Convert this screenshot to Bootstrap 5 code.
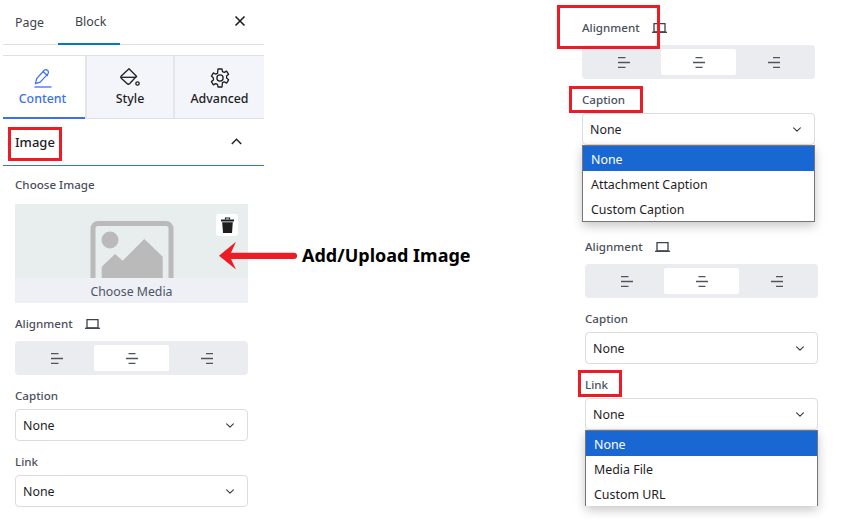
<!DOCTYPE html>
<html lang="en"><head><meta charset="utf-8"><title>Image block</title>
<link href="https://cdn.jsdelivr.net/npm/bootstrap@5.3.0/dist/css/bootstrap.min.css" rel="stylesheet">
<style>
html,body{height:100%}
body{margin:0;background:#fff;font-family:"Noto Sans",sans-serif;color:#1e1e1e;overflow:hidden}
.stage{position:relative;width:862px;height:528px;overflow:hidden}
.side{width:261px;margin-left:3px;flex:none}
.top-tabs{height:45px;border-bottom:1px solid #e0e0e0;padding-left:0;align-items:stretch}
.top-tabs .tab-item{padding:1px 14px 0 12px;font-size:12.4px;color:#3c434a;display:flex;align-items:center;text-decoration:none;height:45px;width:55px}
.top-tabs .tab-item.on{width:62px;padding:2px 0 0 17px;border-bottom:2px solid #007cba;color:#3c434a;height:45px}
.close-x{margin-left:auto;margin-right:18px;display:flex;align-items:center;padding-bottom:3px}
.tri{margin-top:10px;height:64px;border-top:1px solid #e0e0e0;border-bottom:1px solid #e0e0e0}
.tri-item{display:flex;flex-direction:column;align-items:center;background:#f4f5fa;font-size:12.4px;font-weight:500;color:#1e1e1e;padding-top:12px;border-left:2px solid #e4e5ea;text-decoration:none;line-height:18px}
.tri-item svg{display:block;margin-bottom:2px}
.tri-item.on{background:#fff;color:#3b6ef8;border-left:0;border-bottom:2px solid #3b6ef8;height:63px;padding-right:3px}
.sec-head{height:47px;border-bottom:1px solid #3b6ef8;padding:2px 22px 0 12px;font-size:13px;font-weight:500;color:#1e2026}
.body-pad{padding:10px 16px 0 12px}
.lbl{font-size:11.6px;font-weight:500;color:#4b505c;line-height:18px;height:18px;margin:12px 0 4px}
.lbl.dev{margin-bottom:8px;display:flex;align-items:center;gap:12px}
.pick{height:99px;background:#e8eded;margin-top:10px;position:relative;overflow:hidden}
.pick-art{display:block;margin:17px 0 0 75px}
.pick-foot{position:absolute;left:0;right:0;bottom:0;height:25px;background:#eef0f6;text-align:center;font-size:12.3px;line-height:27px;color:#4b5563}
.trash{position:absolute;top:10px;right:10px;width:22px;height:22px;background:#fff;border-radius:3px}
.seg{height:34px;background:#ebecf0;border-radius:4px;padding:4px 0}
.seg-it{display:flex;align-items:center;justify-content:center;border-radius:2px}
.seg-it.on{flex:0 0 75px;background:#fff}
.seg-it.pad{flex:0 0 79px;padding-left:5px}
.seg-it.rest{flex:0 0 79px;padding-right:3px}
.fake-select.form-select{height:32px;font-size:12.4px;line-height:18px;padding:2px 24px 0 7px;border:1px solid #dcdcde;border-radius:4px;color:#1e1e1e;background-size:12px 9px;background-position:right 11px center;display:flex;align-items:center;font-family:inherit}
.rcol{flex:none;width:236px;margin-left:318px}
.pnl{width:233px}
.pnl.second{margin-left:3px}
.drop-wrap{position:relative}
.opts{position:absolute;left:0;right:0;top:32px;background:#fff;border:1px solid #767676;box-shadow:0 4px 10px rgba(0,0,0,.22);font-size:12.4px;z-index:3;color:#1e1e1e}
.opts.cut{border-bottom:0;height:76px}
.opts .o{height:25px;line-height:27px;padding-left:8px}
.opts .o.sel{background:#1967d2;color:#fff}
.mark-box{position:absolute;border:3px solid #ed1c24;z-index:5;pointer-events:none}
.note{position:absolute;left:219px;top:241px;display:flex;align-items:center;gap:5px;z-index:4;height:30px}
.note-txt{font-size:18px;font-weight:700;color:#000;white-space:nowrap;line-height:28px;margin-bottom:2px}
</style></head><body>
<div class="stage d-flex">
 <div class="side">
  <div class="nav top-tabs">
   <a class="tab-item" href="#">Page</a>
   <a class="tab-item on" href="#">Block</a>
   <span class="close-x"><svg width="12" height="12" viewBox="0 0 12 12"><path d="M1.500 1.500l9 9M10.500 1.500l-9 9" stroke="#1e1e1e" stroke-width="1.600" fill="none"/></svg></span>
  </div>
  <div class="tri d-flex">
   <a class="tri-item on" style="width:82px" href="#"><svg width="20" height="20" viewBox="0 0 20 20" fill="none" stroke="#3b6ef8" stroke-width="1.200"><path d="M2.500 15.500l1.200-5 7.300-8c1-1 2.700-1 3.700 0s1 2.600 0 3.600l-7.600 8z"/><path d="M10 3.500l4.800 4.500"/><path d="M1.500 19h17" stroke-width="1.300"/></svg>Content</a>
   <a class="tri-item" style="width:88px" href="#"><svg width="20" height="20" viewBox="0 0 20 20" fill="none" stroke="#1e1e1e" stroke-width="1.300"><path d="M9 .8l7.500 7.500-6.700 7.200c-.8.800-2 .8-2.800 0L1.500 10.500c-.8-.8-.8-2 0-2.800z"/><path d="M.9 9.300h15.500"/><circle cx="17.500" cy="15.500" r="1.700"/></svg>Style</a>
   <a class="tri-item" style="width:91px" href="#"><svg width="20" height="20" viewBox="0 0 20 20" fill="none" stroke="#1e1e1e" stroke-width="1.300"><path d="M8 1h4l.5 2.600 1.800.8 2.300-1.300 2 3.200-2 1.800v2l2 1.700-2 3.300-2.300-1.300-1.800.8L12 19H8l-.5-2.600-1.800-.8-2.300 1.300-2-3.300 2-1.700v-2l-2-1.800 2-3.200 2.300 1.300 1.800-.8z" stroke-linejoin="round"/><circle cx="10" cy="10" r="3.100"/></svg>Advanced</a>
  </div>
  <div class="sec-head d-flex align-items-center justify-content-between"><span>Image</span><svg width="11" height="7" viewBox="0 0 11 7" class="mb-1"><path d="M.8 6l4.700-4.700L10.200 6" stroke="#1e1e1e" stroke-width="1.400" fill="none"/></svg></div>
  <div class="body-pad">
   <div class="lbl" style="margin:0">Choose Image</div>
   <div class="pick">
    <svg class="pick-art" width="84" height="70" viewBox="0 0 84 70"><rect x="3" y="2.500" width="78" height="70" rx="5" fill="none" stroke="#bababa" stroke-width="5"/><circle cx="20" cy="19" r="8.500" fill="#bababa"/><path d="M11.700 70V45.700L25 33l7.700 6.700L54.300 18l18.400 17.700V70z" fill="#bababa"/></svg>
    <div class="pick-foot">Choose Media</div>
    <div class="trash d-flex align-items-center justify-content-center"><svg width="13" height="16" viewBox="0 0 13 16"><path d="M4.500 2.500V1h4v1.500" stroke="#1e1e1e" stroke-width="1.200" fill="none"/><path d="M0 2.500h13v2H0z" fill="#1e1e1e"/><path d="M1.200 5.300h10.600l-.8 10.700H2z" fill="#1e1e1e"/></svg></div>
   </div>
   <div class="lbl dev">Alignment <svg width="15" height="10" viewBox="0 0 15 10" fill="none" stroke="#3c434a" stroke-width="1.300"><path d="M2 .7h11v8.200H2z"/><path d="M0 9.300h15"/></svg></div>
   <div class="seg d-flex">
    <div class="seg-it pad"><svg width="12" height="11" viewBox="0 0 12 11"><path d="M0 .7h7.500M0 5.500h12M0 10.300h7.500" stroke="#50545e" stroke-width="1.300" fill="none"/></svg></div>
    <div class="seg-it on"><svg width="12" height="11" viewBox="0 0 12 11"><path d="M2.500 .7h7M0 5.500h12M2.500 10.300h7" stroke="#50545e" stroke-width="1.300" fill="none"/></svg></div>
    <div class="seg-it rest"><svg width="12" height="11" viewBox="0 0 12 11"><path d="M5 .7h7M0 5.500h12M5 10.300h7" stroke="#50545e" stroke-width="1.300" fill="none"/></svg></div>
   </div>
   <div class="lbl">Caption</div>
   <div class="form-select fake-select">None</div>
   <div class="lbl">Link</div>
   <div class="form-select fake-select">None</div>
  </div>
 </div>
 <div class="rcol">
  <div class="pnl">
   <div class="lbl dev" style="margin-top:19px">Alignment <svg width="15" height="10" viewBox="0 0 15 10" fill="none" stroke="#3c434a" stroke-width="1.300"><path d="M2 .7h11v8.200H2z"/><path d="M0 9.300h15"/></svg></div>
   <div class="seg d-flex">
    <div class="seg-it pad"><svg width="12" height="11" viewBox="0 0 12 11"><path d="M0 .7h7.500M0 5.500h12M0 10.300h7.500" stroke="#50545e" stroke-width="1.300" fill="none"/></svg></div>
    <div class="seg-it on"><svg width="12" height="11" viewBox="0 0 12 11"><path d="M2.500 .7h7M0 5.500h12M2.500 10.300h7" stroke="#50545e" stroke-width="1.300" fill="none"/></svg></div>
    <div class="seg-it rest"><svg width="12" height="11" viewBox="0 0 12 11"><path d="M5 .7h7M0 5.500h12M5 10.300h7" stroke="#50545e" stroke-width="1.300" fill="none"/></svg></div>
   </div>
   <div class="lbl">Caption</div>
   <div class="drop-wrap">
    <div class="form-select fake-select">None</div>
    <div class="opts"><div class="o sel">None</div><div class="o">Attachment Caption</div><div class="o">Custom Caption</div></div>
   </div>
  </div>
  <div class="pnl second" style="margin-top:93px">
   <div class="lbl dev" style="margin-top:0">Alignment <svg width="15" height="10" viewBox="0 0 15 10" fill="none" stroke="#3c434a" stroke-width="1.300"><path d="M2 .7h11v8.200H2z"/><path d="M0 9.300h15"/></svg></div>
   <div class="seg d-flex">
    <div class="seg-it pad"><svg width="12" height="11" viewBox="0 0 12 11"><path d="M0 .7h7.500M0 5.500h12M0 10.300h7.500" stroke="#50545e" stroke-width="1.300" fill="none"/></svg></div>
    <div class="seg-it on"><svg width="12" height="11" viewBox="0 0 12 11"><path d="M2.500 .7h7M0 5.500h12M2.500 10.300h7" stroke="#50545e" stroke-width="1.300" fill="none"/></svg></div>
    <div class="seg-it rest"><svg width="12" height="11" viewBox="0 0 12 11"><path d="M5 .7h7M0 5.500h12M5 10.300h7" stroke="#50545e" stroke-width="1.300" fill="none"/></svg></div>
   </div>
   <div class="lbl">Caption</div>
   <div class="form-select fake-select">None</div>
   <div class="lbl">Link</div>
   <div class="drop-wrap">
    <div class="form-select fake-select">None</div>
    <div class="opts cut"><div class="o sel">None</div><div class="o">Media File</div><div class="o">Custom URL</div></div>
   </div>
  </div>
 </div>
 <div class="note">
  <svg width="78" height="30" viewBox="0 0 78 30"><path d="M0 14.700L17 .7l-5 11h63a3.150 3.150 0 0 1 0 6.300H12l5 10.500z" fill="#ed1c24"/></svg>
  <span class="note-txt">Add/Upload Image</span>
 </div>
 <div class="mark-box" style="left:8px;top:127px;width:54px;height:34px"></div>
 <div class="mark-box" style="left:557px;top:5px;width:103px;height:44px"></div>
 <div class="mark-box" style="left:569px;top:86px;width:74px;height:27px"></div>
 <div class="mark-box" style="left:578px;top:370px;width:44px;height:27px"></div>
</div>
<script src="https://cdn.jsdelivr.net/npm/bootstrap@5.3.0/dist/js/bootstrap.bundle.min.js"></script>
</body></html>
